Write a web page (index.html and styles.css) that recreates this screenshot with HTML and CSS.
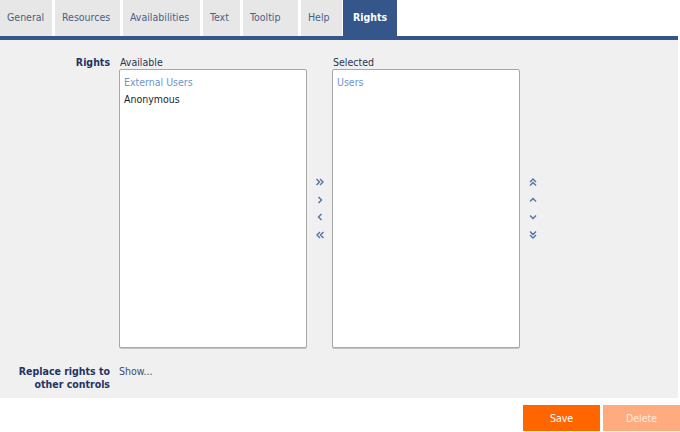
FILE: index.html
```html
<!DOCTYPE html>
<html>
<head>
<meta charset="utf-8">
<link rel="stylesheet" href="styles.css">
</head>
<body>
<div class="tabs">
  <div class="tab">General</div>
  <div class="tab">Resources</div>
  <div class="tab">Availabilities</div>
  <div class="tab">Text</div>
  <div class="tab">Tooltip</div>
  <div class="tab">Help</div>
  <div class="tab active">Rights</div>
</div>
<div class="panel">
  <div class="form">
    <div class="label label-rights">Rights</div>
    <div class="picker">
      <div class="col">
        <div class="col-head">Available</div>
        <div class="listbox">
          <div class="item muted">External Users</div>
          <div class="item">Anonymous</div>
        </div>
      </div>
      <div class="arrows">
        <svg viewBox="0 0 10 10"><path d="M1.5 2 L4.5 5 L1.5 8 M5 2 L8 5 L5 8"/></svg>
        <svg viewBox="0 0 10 10"><path d="M3.5 2 L6.5 5 L3.5 8"/></svg>
        <svg viewBox="0 0 10 10"><path d="M6.5 2 L3.5 5 L6.5 8"/></svg>
        <svg viewBox="0 0 10 10"><path d="M5 2 L2 5 L5 8 M8.5 2 L5.5 5 L8.5 8"/></svg>
      </div>
      <div class="col">
        <div class="col-head">Selected</div>
        <div class="listbox">
          <div class="item muted">Users</div>
        </div>
      </div>
      <div class="arrows">
        <svg viewBox="0 0 10 10"><path d="M2 5 L5 2 L8 5 M2 8.5 L5 5.5 L8 8.5"/></svg>
        <svg viewBox="0 0 10 10"><path d="M2 6.5 L5 3.5 L8 6.5"/></svg>
        <svg viewBox="0 0 10 10"><path d="M2 3.5 L5 6.5 L8 3.5"/></svg>
        <svg viewBox="0 0 10 10"><path d="M2 1.5 L5 4.5 L8 1.5 M2 5 L5 8 L8 5"/></svg>
      </div>
    </div>
    <div class="label label-replace">Replace rights to<br>other controls</div>
    <div class="show">Show...</div>
  </div>
</div>
<div class="footer">
  <button class="btn save">Save</button>
  <button class="btn delete">Delete</button>
</div>
</body>
</html>
```
FILE: styles.css
```css
* { box-sizing: border-box; }
html, body { margin: 0; padding: 0; background: #fff; }
body {
  font-family: "DejaVu Sans Condensed", "DejaVu Sans", sans-serif;
  font-stretch: condensed;
  font-size: 10.5px;
  color: #222;
  width: 680px;
  height: 432px;
  overflow: hidden;
}
.tabs {
  display: flex;
  gap: 3px;
  height: 40px;
  border-bottom: 4px solid #34568b;
  margin-right: 2px;
}
.tab {
  background: #e7e7e7;
  color: #4b5f86;
  padding: 0 7px;
  height: 36px;
  line-height: 35px;
  white-space: nowrap;
}
.tab:nth-child(1) { width: 52px; }
.tab:nth-child(2) { width: 65px; }
.tab:nth-child(3) { width: 77px; }
.tab:nth-child(4) { width: 37px; }
.tab:nth-child(5) { width: 55px; }
.tab:nth-child(6) { width: 41px; margin-right: -2px; }
.tab.active {
  background: #34568b;
  color: #fff;
  font-weight: bold;
  width: 54px;
  text-align: center;
  padding: 0;
}
.panel {
  background: #f0f0f0;
  height: 358px;
  margin-right: 2px;
  padding-top: 15px;
}
.form {
  display: grid;
  grid-template-columns: 110px auto;
  column-gap: 9px;
  row-gap: 17px;
  align-items: start;
}
.label {
  text-align: right;
  font-weight: bold;
  color: #1f3464;
  line-height: 14px;
}
.label-replace { line-height: 13px; }
.picker {
  display: flex;
  align-items: stretch;
}
.col { display: flex; flex-direction: column; }
.col-head {
  line-height: 14px;
  color: #2b3550;
  padding-left: 1px;
}
.listbox {
  width: 188px;
  height: 279px;
  background: #fff;
  border: 1px solid #a8a8a8;
  border-radius: 2px;
  box-shadow: 0 1px 0 #c4c4c4;
  padding: 4px 4px;
}
.item { line-height: 17px; color: #1e1e1e; }
.item.muted { color: #6f95cc; }
.arrows {
  width: 25px;
  padding-top: 14px;
  display: flex;
  flex-direction: column;
  justify-content: center;
  align-items: center;
  gap: 7.6px;
}
.arrows svg {
  width: 10px;
  height: 10px;
  fill: none;
  stroke: #4f73aa;
  stroke-width: 1.4;
}
.show {
  color: #3d4d6e;
  line-height: 13px;
}
.footer {
  display: flex;
  justify-content: flex-end;
  gap: 3px;
  padding-top: 7px;
}
.btn {
  width: 77px;
  height: 26px;
  border: 0;
  font-family: "DejaVu Sans Condensed", "DejaVu Sans", sans-serif;
  font-stretch: condensed;
  font-size: 10.5px;
  color: #fff;
  padding: 0;
}
.save { background: #ff6600; }
.delete { background: #ffab80; color: #ffe9de; }
```
